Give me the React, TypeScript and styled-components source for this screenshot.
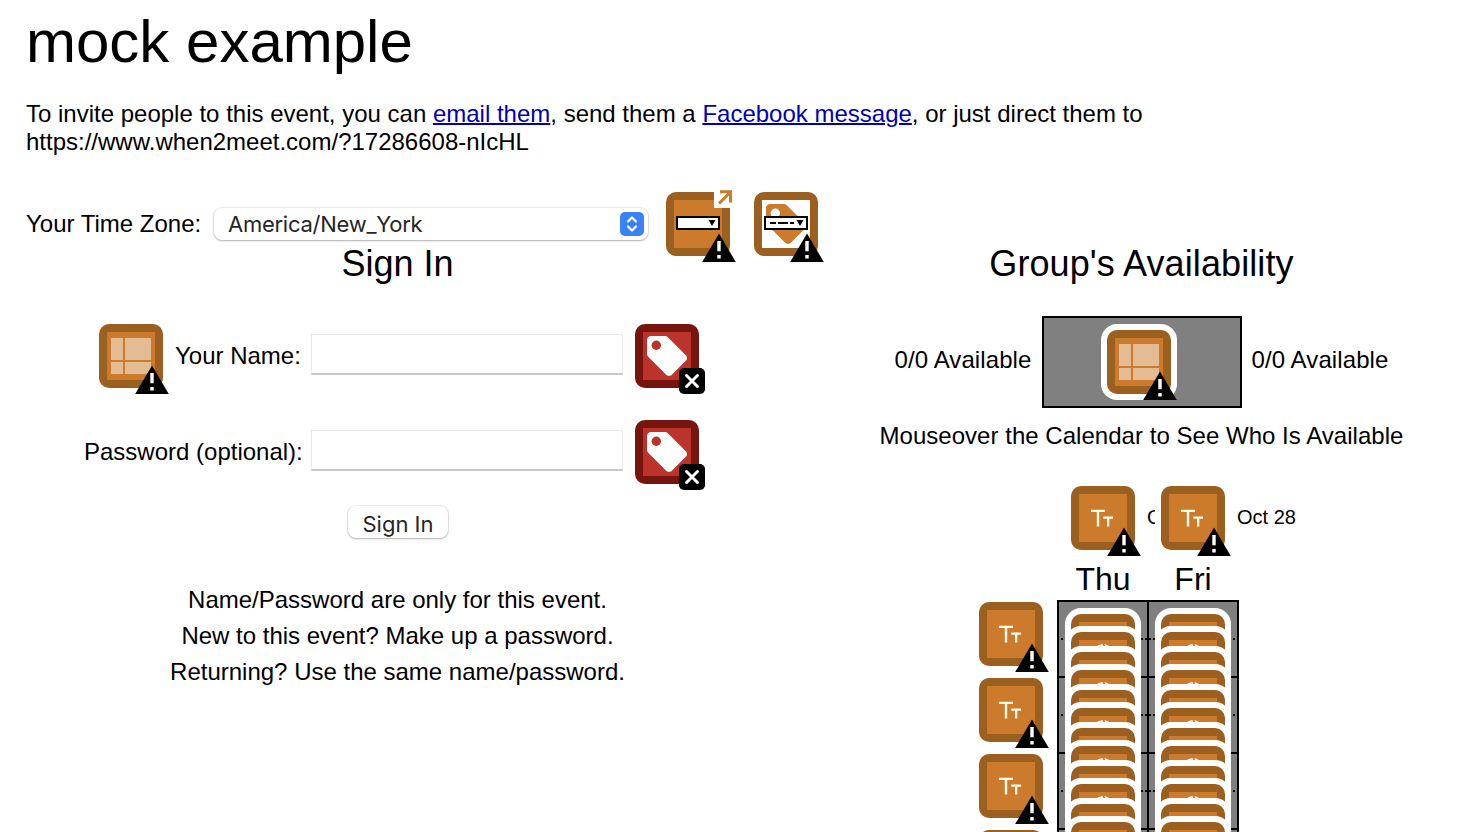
import React from "react";
import styled, { createGlobalStyle } from "styled-components";

const Global = createGlobalStyle`
  body { margin: 0; background: #fff; color: #000; font-family: "Liberation Sans", Arial, sans-serif; font-size: 24px; }
  #root { height: 832px; overflow: hidden; }
  * { box-sizing: border-box; }
`;

const Page = styled.main`
  display: flex;
  flex-direction: column;
  width: 1460px;
  height: 832px;
  overflow: hidden;
`;

const Title = styled.h1`
  margin: 8px 0 0 26px;
  font-size: 60px;
  line-height: 68px;
  font-weight: 400;
`;

const Invite = styled.p`
  margin: 24px 0 0 26px;
  line-height: 28px;
  white-space: nowrap;
`;

const Link = styled.a`
  color: #0000b4;
  text-decoration: underline;
  text-decoration-thickness: 2px;
`;

const ZoneRow = styled.div`
  display: flex;
  align-items: center;
  height: 64px;
  margin: 36px 0 0 26px;
`;

const ZoneLabel = styled.span`
  width: 188px;
`;

const ZoneSelect = styled.div`
  display: flex;
  align-items: center;
  justify-content: space-between;
  width: 434px;
  height: 32px;
  margin-right: 18px;
  padding: 0 4px 0 14px;
  border-radius: 8px;
  color: #262626;
  font-family: Inter, sans-serif;
  font-size: 22px;
  letter-spacing: -0.26px;
  box-shadow: 0 0 1px 1px rgba(0, 0, 0, 0.08), 0 1px 2px rgba(0, 0, 0, 0.25);
`;

const Columns = styled.div`
  display: flex;
  margin-top: -12px;
`;

const Column = styled.section<{ $left: number; $width: number }>`
  display: flex;
  flex-direction: column;
  align-items: center;
  flex: none;
  width: ${(p) => p.$width}px;
  margin-left: ${(p) => p.$left}px;
`;

const Heading = styled.h2<{ $spacing?: number }>`
  margin: 0;
  font-size: 36px;
  line-height: 40px;
  font-weight: 400;
  letter-spacing: ${(p) => p.$spacing ?? 0}px;
`;

const Field = styled.div<{ $top: number; $left: number }>`
  display: flex;
  align-items: center;
  align-self: flex-start;
  height: 64px;
  margin-top: ${(p) => p.$top}px;
  margin-left: ${(p) => p.$left}px;
`;

const FieldLabel = styled.label<{ $left: number; $width: number }>`
  width: ${(p) => p.$width}px;
  margin-left: ${(p) => p.$left}px;
  white-space: nowrap;
`;

const Input = styled.input`
  width: 312px;
  height: 41px;
  margin: -3px 12px 0 0;
  padding: 0 6px;
  border: 1px solid #e9e9e9;
  border-bottom: 2px solid #c9c9c9;
  background: #fff;
  font-size: 24px;
  outline: none;
`;

const Button = styled.button`
  width: 100px;
  height: 32px;
  margin: 22px 0 0 1px;
  padding: 4px 0 0;
  border: 0;
  border-radius: 8px;
  background: #fff;
  color: #262626;
  font-family: Inter, sans-serif;
  font-size: 22px;
  line-height: 28px;
  box-shadow: 0 0 1px 1px rgba(0, 0, 0, 0.08), 0 1px 2px rgba(0, 0, 0, 0.25);
`;

const Notes = styled.div`
  margin-top: 44px;
  line-height: 36px;
  text-align: center;
`;

const Legend = styled.div`
  display: flex;
  align-items: center;
  gap: 10px;
  margin-top: 32px;
  letter-spacing: 0.1px;
  white-space: nowrap;
`;

const LegendText = styled.span`
  padding-bottom: 4px;
`;

const LegendBar = styled.div`
  display: flex;
  justify-content: center;
  width: 200px;
  height: 92px;
  padding: 6px 6px 0 0;
  border: 2px solid #000;
  background: #808080;
`;

const Hint = styled.p`
  margin: 14px 0 0;
  line-height: 28px;
  letter-spacing: 0.03px;
  white-space: nowrap;
`;

const Calendar = styled.div`
  display: flex;
  align-self: flex-start;
  margin: 36px 0 0 179px;
`;

const HourColumn = styled.div`
  display: flex;
  flex-direction: column;
  gap: 12px;
  width: 78px;
  padding-top: 116px;
`;

const Days = styled.div`
  display: flex;
`;

const Day = styled.div<{ $first?: boolean }>`
  width: ${(p) => (p.$first ? 92 : 90)}px;
  padding-left: ${(p) => (p.$first ? 2 : 0)}px;
`;

const DayDate = styled.div`
  position: relative;
  display: flex;
  align-items: center;
  gap: 12px;
  width: 150px;
  height: 64px;
  margin-left: 6px;
  padding-left: 6px;
  background: #fff;
  font-size: 20px;
  white-space: nowrap;
`;

const DateText = styled.span`
  padding-bottom: 2px;
`;

const DayName = styled.div`
  height: 50px;
  padding: 10px 2px 0 0;
  font-size: 32px;
  line-height: 38px;
  text-align: center;
`;

const Slots = styled.div<{ $first?: boolean }>`
  width: ${(p) => (p.$first ? 92 : 90)}px;
  margin-left: ${(p) => (p.$first ? -2 : 0)}px;
  border: 2px solid #000;
  border-left-width: ${(p) => (p.$first ? 2 : 0)}px;
  background: #808080;
`;

const Slot = styled.div<{ $line: "none" | "dotted" | "solid"; $phase: number }>`
  height: ${(p) => (p.$line === "none" ? 18 : 20)}px;
  padding: 6px 0 0 6px;
  ${(p) => p.$line === "solid" && "border-bottom: 2px solid #000;"}
  ${(p) =>
    p.$line === "dotted" &&
    `background: repeating-linear-gradient(90deg, #000 0 2px, #808080 2px 4px) ${p.$phase}px 100% / 100px 2px repeat-x;`}
`;

const Ring = styled.div`
  position: relative;
  flex: none;
  width: 76px;
  height: 76px;
  padding: 6px;
  border-radius: 16px;
  background: #fff;
`;

const IconSvg = styled.svg`
  display: block;
  flex: none;
  width: 64px;
  height: 64px;
  overflow: visible;
`;

const ORANGE = "#cb7b2b";
const BROWN = "#9b5f20";
const TAG =
  "M21.41 11.58l-9-9C12.05 2.22 11.55 2 11 2H4c-1.1 0-2 .9-2 2v7c0 .55.22 1.05.59 1.42l9 9c.36.36.86.58 1.41.58.55 0 1.05-.22 1.41-.59l7-7c.37-.36.59-.86.59-1.41 0-.55-.23-1.06-.59-1.42z";

type Kind = "select" | "selectLabel" | "table" | "text" | "tag" | "blank" | "header";

const Warning = () => (
  <g>
    <path d="M53 41.500L69.800 70H36.200z" fill="#000" />
    <path d="M51.300 49h3.400v10.300h-3.400zM51.300 63h3.400v3.600h-3.400z" fill="#fff" />
  </g>
);

const Tag = ({ fill, hole }: { fill: string; hole: string }) => (
  <g>
    <path d={TAG} fill={fill} transform="translate(8 8) scale(2)" />
    <circle cx="21.300" cy="21.300" r="4.700" fill={hole} />
  </g>
);

const Badge = ({ kind }: { kind: Kind }) => {
  const red = kind === "tag";
  return (
    <IconSvg viewBox="0 0 64 64">
      <rect width="64" height="64" rx="10" fill={red ? "#76150e" : BROWN} />
      <rect x="8" y="8" width="48" height="48" fill={red ? "#bb332a" : kind === "selectLabel" ? "#fff" : ORANGE} />
      {kind === "table" && <path d="M12 14h12v22H12zM26 14h26v22H26zM12 38h12v12H12zM26 38h26v12H26z" fill="#e4bc94" />}
      {kind === "text" && (
        <path d="M20 23.700h14v2.200h-5.800v14.500h-2.400V25.900H20zM32.300 30.500H42v2.300h-3.700v7.600h-2.300v-7.600h-3.700z" fill="#fffbe9" />
      )}
      {kind === "selectLabel" && <Tag fill={ORANGE} hole="#fff" />}
      {red && <Tag fill="#fff" hole="#bb332a" />}
      {(kind === "select" || kind === "selectLabel") && (
        <g>
          <rect x="11" y="25" width="42" height="12" fill="#fff" stroke="#000" strokeWidth="2" />
          <path d="M42.500 28h7L46 34z" fill="#000" />
        </g>
      )}
      {kind === "selectLabel" && <path d="M16 31h6M24 31h10M36 31h4" stroke="#000" strokeWidth="1.900" />}
      {kind === "select" && (
        <g>
          <rect x="48" y="-2" width="18" height="18" fill="#fff" />
          <path d="M53 11.500L64.500 0M54 -.300h10.500v10.800" fill="none" stroke={ORANGE} strokeWidth="3" />
        </g>
      )}
      {kind === "header" && <path d="M25 14.500q2.500-2 6.500-2.500l.8 2.500zM33.500 12q3 .5 5 2.500h-4z" fill="#fff" />}
      {red ? (
        <g>
          <rect x="44" y="44" width="26" height="26" rx="5" fill="#000" />
          <path d="M51.500 51.500l11 11M62.500 51.500l-11 11" stroke="#fff" strokeWidth="3" strokeLinecap="round" />
        </g>
      ) : (
        kind !== "blank" && kind !== "header" && <Warning />
      )}
    </IconSvg>
  );
};

const ZoneIcons = styled.div`
  display: flex;
  gap: 24px;
`;

const Arrows = styled.svg`
  width: 24px;
  height: 24px;
`;

const QUARTERS = Array.from({ length: 16 }, (_, i) => i);

const lineFor = (i: number) => (i % 4 === 3 ? "solid" : i % 4 === 1 ? "dotted" : "none");

const SlotColumn = ({ first }: { first?: boolean }) => (
  <Slots $first={first}>
    {QUARTERS.map((i) => (
      <Slot key={i} $line={lineFor(i)} $phase={first ? 2 : 0}>
        <Ring>
          <Badge kind={i % 2 ? "header" : "blank"} />
        </Ring>
      </Slot>
    ))}
  </Slots>
);

export default function App() {
  return (
    <Page>
      <Global />
      <Title>mock example</Title>
      <Invite>
        To invite people to this event, you can <Link>email them</Link>, send them a <Link>Facebook message</Link>, or
        just direct them to
        <br />
        https://www.when2meet.com/?17286608-nIcHL
      </Invite>
      <ZoneRow>
        <ZoneLabel>Your Time Zone:</ZoneLabel>
        <ZoneSelect>
          America/New_York
          <Arrows viewBox="0 0 24 24">
            <rect width="24" height="24" rx="5" fill="#3b82f6" />
            <path
              d="M8 9.500l4-4 4 4M8 14.500l4 4 4-4"
              fill="none"
              stroke="#fff"
              strokeWidth="2.200"
              strokeLinecap="round"
              strokeLinejoin="round"
            />
          </Arrows>
        </ZoneSelect>
        <ZoneIcons>
          <Badge kind="select" />
          <Badge kind="selectLabel" />
        </ZoneIcons>
      </ZoneRow>
      <Columns>
        <Column $left={26} $width={743}>
          <Heading>Sign In</Heading>
          <Field $top={40} $left={73}>
            <Badge kind="table" />
            <FieldLabel $left={12} $width={136}>Your Name:</FieldLabel>
            <Input />
            <Badge kind="tag" />
          </Field>
          <Field $top={32} $left={58}>
            <FieldLabel $left={0} $width={227}>Password (optional):</FieldLabel>
            <Input />
            <Badge kind="tag" />
          </Field>
          <Button>Sign In</Button>
          <Notes>
            Name/Password are only for this event.
            <br />
            New to this event? Make up a password.
            <br />
            Returning? Use the same name/password.
          </Notes>
        </Column>
        <Column $left={31} $width={683}>
          <Heading $spacing={0.1}>Group's Availability</Heading>
          <Legend>
            <LegendText>0/0 Available</LegendText>
            <LegendBar>
              <Ring>
                <Badge kind="table" />
              </Ring>
            </LegendBar>
            <LegendText>0/0 Available</LegendText>
          </Legend>
          <Hint>Mouseover the Calendar to See Who Is Available</Hint>
          <Calendar>
            <HourColumn>
              <Badge kind="text" />
              <Badge kind="text" />
              <Badge kind="text" />
              <Badge kind="text" />
            </HourColumn>
            <Days>
              <Day $first>
                <DayDate>
                  <Badge kind="text" />
                  <DateText>Oct 27</DateText>
                </DayDate>
                <DayName>Thu</DayName>
                <SlotColumn first />
              </Day>
              <Day>
                <DayDate>
                  <Badge kind="text" />
                  <DateText>Oct 28</DateText>
                </DayDate>
                <DayName>Fri</DayName>
                <SlotColumn />
              </Day>
            </Days>
          </Calendar>
        </Column>
      </Columns>
    </Page>
  );
}
